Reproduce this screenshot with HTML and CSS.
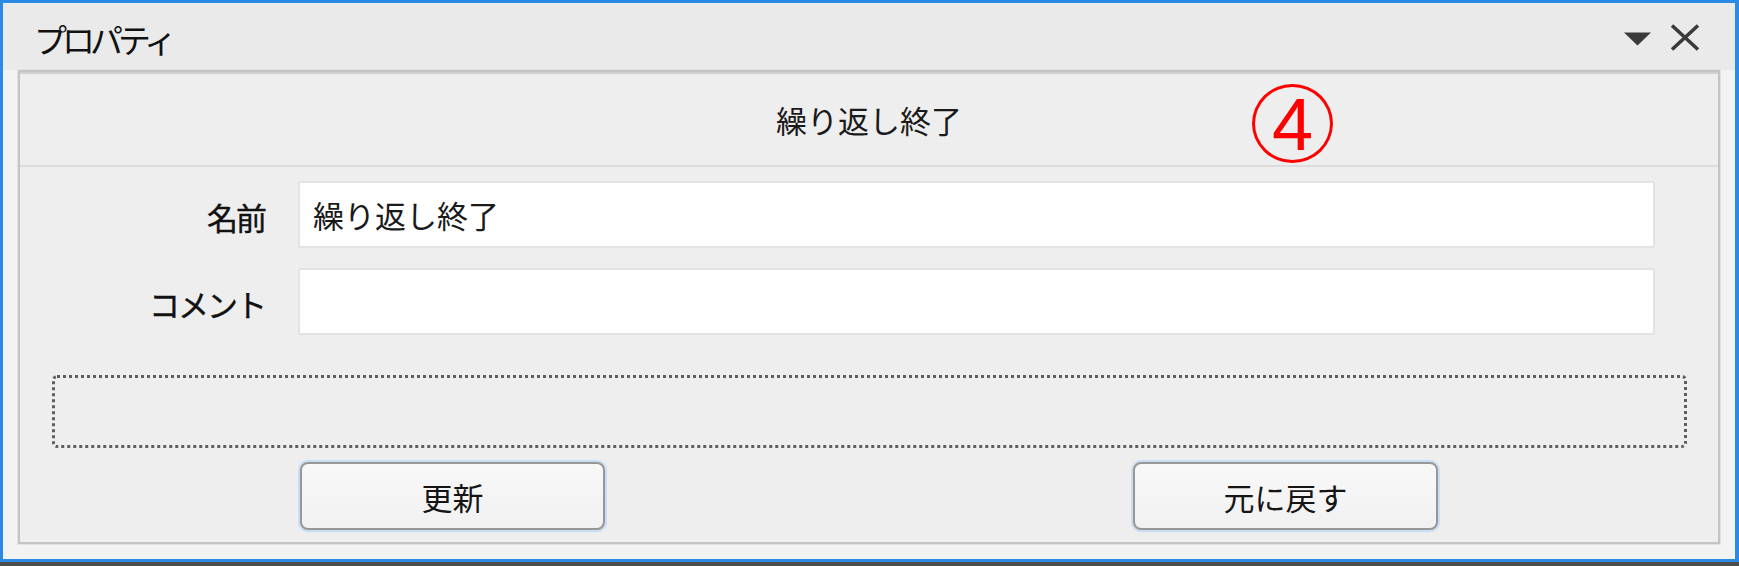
FILE: index.html
```html
<!DOCTYPE html>
<html>
<head>
<title>プロパティ</title>
<link rel="stylesheet" href="styles.css">
</head>
<body>
<div class="window">
  <div class="titlebar">
    <span class="title">プロパティ</span>
    <div class="tools">
      <svg class="ico-menu" width="27" height="14" viewBox="0 0 27 14"><path d="M0 0.5H27L13.5 13.5Z" fill="#3a3a3a"/></svg>
      <svg class="ico-close" width="30" height="27" viewBox="0 0 30 27"><path d="M2 1.5L28 25.5M28 1.5L2 25.5" stroke="#3a3a3a" stroke-width="3.6" fill="none"/></svg>
    </div>
  </div>
  <div class="panel">
    <div class="head">
      繰り返し終了
      <div class="mark"><span>4</span></div>
    </div>
    <div class="form">
      <label class="lbl" for="name">名前</label>
      <div class="field" id="name">繰り返し終了</div>
      <label class="lbl" for="comment">コメント</label>
      <div class="field" id="comment"></div>
    </div>
    <div class="dash"></div>
    <div class="buttons">
      <button type="button" class="btn">更新</button>
      <button type="button" class="btn">元に戻す</button>
    </div>
  </div>
</div>
</body>
</html>
```
FILE: styles.css
```css
* {
  box-sizing: border-box;
}
body {
  margin: 0;
  height: 566px;
  background-color: #4d4d4d;
  font-family: "Noto Sans CJK JP", "Noto Sans", sans-serif;
  color: #151515;
}
.window {
  height: 562px;
  border: 3px solid #2b8be4;
  border-right-width: 4px;
  background-color: #f3f3f3;
  display: flex;
  flex-direction: column;
}
.titlebar {
  height: 67px;
  flex-shrink: 0;
  background-color: #eaeaea;
  display: flex;
  align-items: center;
  padding: 0 35px 0 31px;
}
.title {
  font-size: 33px;
  letter-spacing: -5px;
  line-height: 1;
  margin-top: 6px;
  color: #111;
}
.tools {
  margin-left: auto;
  display: flex;
  align-items: center;
  gap: 19px;
  margin-top: 2px;
}
.ico-menu {
  margin-top: 2px;
}
.panel {
  flex: 1;
  margin: 0 15px 15px 15px;
  border: 2px solid #c4c4c4;
  box-shadow: 0 0 0 1px #e2e2e2;
  background-color: #eeeeee;
  display: flex;
  flex-direction: column;
}
.head {
  position: relative;
  height: 95px;
  border-top: 2px solid #d0d0d0;
  border-bottom: 2px solid #dcdcdc;
  display: flex;
  align-items: center;
  justify-content: center;
  font-size: 31px;
  color: #1a1a1a;
}
.mark {
  position: absolute;
  left: 1232px;
  top: 10px;
  width: 81px;
  height: 79px;
  border: 3px solid #ff0000;
  border-radius: 50%;
  display: flex;
  align-items: center;
  justify-content: center;
}
.mark span {
  font-family: "Liberation Sans", Arial, sans-serif;
  font-size: 74px;
  line-height: 1;
  color: #ff0000;
  margin-top: 2px;
}
.form {
  display: grid;
  grid-template-columns: 245px 1fr;
  grid-auto-rows: 67px;
  column-gap: 33px;
  row-gap: 20px;
  padding: 14px 63px 0 0;
}
.lbl {
  display: flex;
  align-items: center;
  justify-content: flex-end;
  font-size: 31px;
  letter-spacing: -2px;
  padding-top: 4px;
  color: #111;
  -webkit-text-stroke: 0.4px #111;
}
.field {
  background-color: #ffffff;
  border: 2px solid #e3e3e3;
  border-radius: 2px;
  padding: 0 13px;
  display: flex;
  align-items: center;
  font-size: 31px;
  color: #1a1a1a;
}
.dash {
  height: 73px;
  margin: 40px 31px 0 32px;
  border: 3px dotted #5e5e5e;
  border-radius: 5px;
}
.buttons {
  display: flex;
  gap: 528px;
  padding-left: 280px;
  margin-top: 14px;
}
.btn {
  width: 305px;
  height: 68px;
  font-family: inherit;
  font-size: 31px;
  color: #151515;
  background: linear-gradient(#f8f8f8, #f1f1f1);
  border: 2px solid #979797;
  border-radius: 8px;
  box-shadow: 0 0 0 2px #c8def5, 0 1px 2px #a8a8a8;
  padding: 0;
  cursor: pointer;
}
```
